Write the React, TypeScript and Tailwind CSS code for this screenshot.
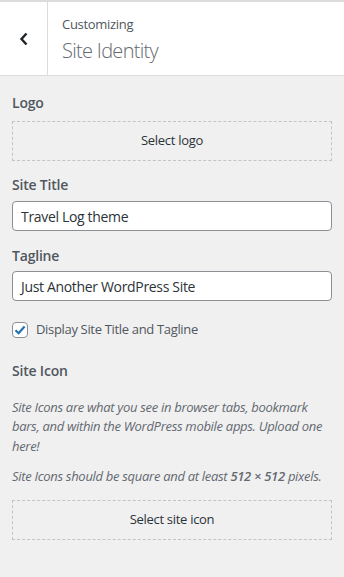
import React from "react"

function Label({ children }: { children: React.ReactNode }) {
  return <div className="text-[14px] font-semibold leading-[20px] tracking-[-0.2px] text-[#50575e]">{children}</div>
}

function DashedButton({ children }: { children: React.ReactNode }) {
  return (
    <div className="flex h-[40px] items-center justify-center border border-dashed border-[#c3c4c7] text-[13px] tracking-[-0.3px] text-[#2c3338]">
      {children}
    </div>
  )
}

function TextInput({ value }: { value: string }) {
  return (
    <div className="flex h-[30px] items-center rounded-[4px] border border-[#8c8f94] bg-white px-[8px] text-[14px] tracking-[-0.33px] text-[#2c3338]">
      {value}
    </div>
  )
}

export default function App() {
  return (
    <div
      className="min-h-[577px] w-[344px] bg-[#f0f0f1]"
      style={{ fontFamily: '"Open Sans", "Noto Sans", sans-serif' }}
    >
      {/* Header */}
      <div className="flex h-[76px] border-t-2 border-b border-[#dcdcde] bg-white">
        <div className="flex w-[48px] items-center justify-center border-r border-[#dcdcde]">
          <svg width="10" height="14" viewBox="0 0 10 14" fill="none">
            <path d="M7.5 1.5 L2.5 7 L7.5 12.5" stroke="#1d2327" strokeWidth="2.4" />
          </svg>
        </div>
        <div className="flex flex-col justify-center pl-[14px] pt-[2px]">
          <div className="text-[13px] leading-[18px] tracking-[-0.3px] text-[#50575e]">Customizing</div>
          <div className="mt-[5px] text-[20px] font-light leading-[26px] tracking-[-0.7px] text-[#646970]">Site Identity</div>
        </div>
      </div>

      <div className="flex flex-col px-[12px] pt-[17px]">
        <Label>Logo</Label>
        <div className="mt-[8px]">
          <DashedButton>Select logo</DashedButton>
        </div>

        <div className="mt-[14px]">
          <Label>Site Title</Label>
        </div>
        <div className="mt-[6px]">
          <TextInput value="Travel Log theme" />
        </div>

        <div className="mt-[15px]">
          <Label>Tagline</Label>
        </div>
        <div className="mt-[5px]">
          <TextInput value="Just Another WordPress Site" />
        </div>

        <div className="mt-[19px] flex items-center gap-[8px]">
          <div className="flex h-[16px] w-[16px] items-center justify-center rounded-[4px] border border-[#8c8f94] bg-white">
            <svg width="14" height="14" viewBox="0 0 14 14" fill="none">
              <path d="M2.5 7.2 L5.6 10.2 L11.6 3.4" stroke="#2271b1" strokeWidth="2.2" />
            </svg>
          </div>
          <span className="text-[13px] tracking-[-0.33px] text-[#50575e]">Display Site Title and Tagline</span>
        </div>

        <div className="mt-[21px]">
          <Label>Site Icon</Label>
        </div>
        <p className="mt-[17px] text-[13px] italic leading-[19.5px] tracking-[-0.3px] text-[#646970]">
          Site Icons are what you see in browser tabs, bookmark bars, and within the WordPress mobile apps. Upload one here!
        </p>
        <p className="mt-[11px] text-[13px] italic leading-[19.5px] tracking-[-0.3px] text-[#646970]">
          Site Icons should be square and at least <strong className="font-semibold">512 × 512</strong> pixels.
        </p>
        <div className="mt-[13px]">
          <DashedButton>Select site icon</DashedButton>
        </div>
      </div>
    </div>
  )
}
